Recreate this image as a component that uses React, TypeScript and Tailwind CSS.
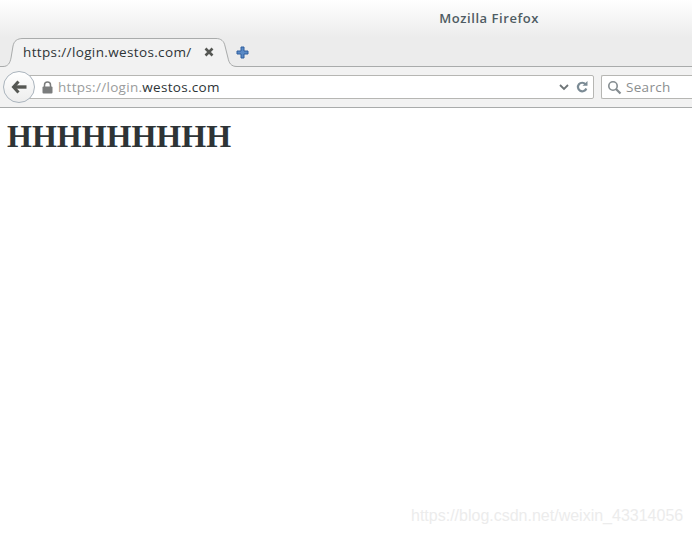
import React from "react";

const ui = "font-['Open_Sans','Noto_Sans',sans-serif]";

function TabShape() {
  const edge = "M0 28.500H3C8 28.500 10 25 11 20L13 8C14 3 17 0.500 23 0.500H216C221 0.500 224 3 225 8L228 20C229 25 231 28.500 237 28.500H240";
  return (
    <svg className="absolute left-0 top-0" width="240" height="30" viewBox="0 0 240 30" fill="none">
      <path d={`${edge}V30H0Z`} fill="#f2f2f2" />
      <path d={edge} stroke="#a9abab" />
    </svg>
  );
}

export default function App() {
  return (
    <div className={`relative w-[692px] h-[534px] overflow-hidden bg-white ${ui}`}>
      <div className="h-[38px] bg-gradient-to-b from-white to-[#ececec] flex justify-end pr-[153px] pt-[9px]">
        <span className="text-[13px] leading-[18px] font-semibold text-[#4f5c63] tracking-[0.56px]">Mozilla Firefox</span>
      </div>

      <div className="relative h-[29px] bg-[#ececec] border-b border-[#a9abab] flex items-start">
        <TabShape />
        <div className="relative flex items-center h-[28px] pl-[23px]">
          <span className="w-[181px] text-[13.500px] leading-[18px] tracking-[0.36px] text-[#2e3436] whitespace-nowrap">https://login.westos.com/</span>
          <svg width="10" height="10" viewBox="0 0 10 10">
            <path d="M1.500 1.500L8.500 8.500M8.500 1.500L1.500 8.500" stroke="#555753" strokeWidth="2.600" />
          </svg>
          <svg className="ml-[22px]" width="13" height="13" viewBox="0 0 13 13">
            <path d="M5 1H8V5H12V8H8V12H5V8H1V5H5Z" fill="#5a8ac6" stroke="#2f5f9e" strokeWidth="1" />
          </svg>
        </div>
      </div>

      <div className="h-[41px] bg-[#f2f2f2] border-b border-[#a9abab] flex items-center pl-[3px]">
        <button className="relative z-10 w-[32px] h-[32px] rounded-full bg-gradient-to-b from-white to-[#ededed] border border-[#aab4bd] flex items-center justify-center shrink-0">
          <svg width="16" height="14" viewBox="0 0 16 14" className="-ml-[1px]">
            <path d="M7.500 1.500L2.500 7L7.500 12.500" fill="none" stroke="#555753" strokeWidth="3" />
            <path d="M3.500 7H15.500" stroke="#555753" strokeWidth="3.400" />
          </svg>
        </button>
        <div className="-ml-[10px] w-[569px] h-[24px] bg-white border border-[#b6b6b3] rounded-r-[2px] flex items-center pl-[16px] pr-[5px] shrink-0">
          <svg width="11" height="13" viewBox="0 0 11 13" className="shrink-0">
            <path d="M2.500 6V4A3 3 0 0 1 8.500 4V6" fill="none" stroke="#7b7d7d" strokeWidth="1.500" />
            <rect x="0.500" y="5.500" width="10" height="7" rx="1" fill="#7b7d7d" />
          </svg>
          <span className="ml-[5px] text-[13.500px] leading-[18px] tracking-[0.3px] text-[#9a9c9c] whitespace-nowrap">
            https://login.<span className="text-[#2e3436]">westos.com</span>
          </span>
          <svg className="ml-auto" width="10" height="7" viewBox="0 0 10 7">
            <path d="M1 1L5 5L9 1" fill="none" stroke="#6e7577" strokeWidth="1.800" />
          </svg>
          <svg className="ml-[7px]" width="12" height="12" viewBox="0 0 12 12">
            <path d="M9.500 3.200A4.300 4.300 0 1 0 10.300 7.500" fill="none" stroke="#7b8b95" strokeWidth="2.200" />
            <path d="M6.500 4.800H11.500V0Z" fill="#7b8b95" />
          </svg>
        </div>
        <div className="ml-[7px] h-[24px] flex-1 bg-white border border-r-0 border-[#b6b6b3] rounded-l-[2px] flex items-center pl-[5px]">
          <svg width="15" height="15" viewBox="0 0 15 15" className="shrink-0">
            <circle cx="6" cy="6" r="4.200" fill="none" stroke="#848c90" strokeWidth="1.600" />
            <path d="M9 9L13.500 13.500" stroke="#848c90" strokeWidth="2.200" />
          </svg>
          <span className="ml-[4px] text-[13.500px] leading-[18px] text-[#8b8e8f] tracking-[0.3px]">Search</span>
        </div>
      </div>

      <h1 className="pl-[7px] pt-[10px] text-[32px] leading-[37px] font-bold text-[#2e3436] font-['Liberation_Serif',serif]">HHHHHHHHH</h1>

      <div className="absolute left-[411px] top-[505px] text-[16px] leading-[22px] text-[#ececec] whitespace-nowrap font-['Liberation_Sans',sans-serif]">
        https://blog.csdn.net/weixin_43314056
      </div>
    </div>
  );
}
